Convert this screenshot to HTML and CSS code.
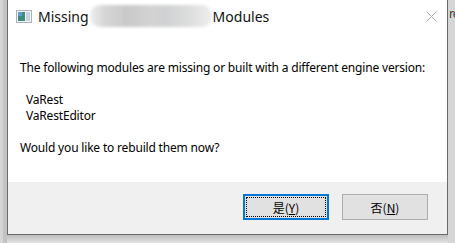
FILE: index.html
```html
<!DOCTYPE html>
<html>
<head>
<meta charset="utf-8">
<link rel="stylesheet" href="styles.css">
</head>
<body>
<div class="screen">
  <div class="side-left"></div>
  <div class="window-col">
    <div class="window">
      <div class="titlebar">
        <svg class="app-icon" width="16" height="13" viewBox="0 0 16 13">
          <rect x="0.5" y="0.5" width="15" height="12" fill="#f4f6f8" stroke="#a9b0b8"/>
          <rect x="2" y="2" width="7" height="9" fill="#3f8a7c"/>
          <rect x="2" y="2" width="4" height="4" fill="#5aa0c8"/>
          <rect x="10" y="2" width="4" height="9" fill="#c8d2dc"/>
        </svg>
        <span class="title">Missing</span>
        <span class="blur"></span>
        <span class="title">Modules</span>
        <span class="spacer"></span>
        <svg class="close" width="11" height="11" viewBox="0 0 11 11">
          <path d="M0.5 0.5 L10.5 10.5 M10.5 0.5 L0.5 10.5" stroke="#a8a8a8" stroke-width="1"/>
        </svg>
      </div>
      <div class="content">
        <p class="msg">The following modules are missing or built with a different engine version:</p>
        <div class="mods">
          <div>VaRest</div>
          <div>VaRestEditor</div>
        </div>
        <p class="msg">Would you like to rebuild them now?</p>
      </div>
      <div class="footer">
        <button class="btn default">是(<u>Y</u>)</button>
        <button class="btn">否(<u>N</u>)</button>
      </div>
    </div>
    <div class="shadow"></div>
  </div>
  <div class="side-right"><span class="bgtext">re</span></div>
</div>
</body>
</html>
```
FILE: styles.css
```css
html, body {
  margin: 0;
  padding: 0;
  width: 455px;
  height: 243px;
  overflow: hidden;
  background: #cfcfcf;
  font-family: "Noto Sans", "Noto Sans CJK SC", sans-serif;
}
.screen {
  display: flex;
  height: 243px;
}
.side-left {
  width: 7px;
  background: linear-gradient(to right, #d6d6d6 0 3px, #c3c3c3 3px 7px);
}
.window-col {
  width: 441px;
  display: flex;
  flex-direction: column;
}
.window {
  height: 235px;
  box-sizing: border-box;
  border: 1px solid #6a6a6a;
  border-top: none;
  background: #ffffff;
  display: flex;
  flex-direction: column;
}
.shadow {
  flex: 1;
  background: linear-gradient(to bottom, #bdbdbd, #e4e4e4);
}
.side-right {
  flex: 1;
  background: #d6d6d6;
  display: flex;
  align-items: flex-start;
  overflow: hidden;
}
.bgtext {
  margin: 7px 0 0 1px;
  font-size: 12px;
  line-height: 14px;
  letter-spacing: -1px;
  color: #3a3a3a;
}
.titlebar {
  height: 32px;
  display: flex;
  align-items: center;
  padding: 0 10px 0 8px;
}
.app-icon {
  margin-right: 6px;
}
.title {
  font-size: 14px;
  color: #111;
}
.blur {
  width: 122px;
  height: 22px;
  margin: 0 1px 0 1px;
  border-radius: 10px;
  background: linear-gradient(to right, #eeeeee 0%, #d6d6d6 12%, #c9c9c9 30%, #d3d3d3 50%, #cfd1d3 62%, #dcdcdc 80%, #eeeeee 100%);
  filter: blur(1.5px);
}
.spacer { flex: 1; }
.content {
  flex: 1;
  padding: 28px 8px 0 12px;
  font-size: 12px;
  color: #000;
}
.msg {
  margin: 0;
  line-height: 16px;
  white-space: nowrap;
  letter-spacing: -0.18px;
}
.mods {
  padding: 16px 0 16px 6px;
  line-height: 16px;
  letter-spacing: -0.18px;
}
.footer {
  height: 52px;
  background: #f0f0f0;
  display: flex;
  justify-content: flex-end;
  align-items: flex-start;
  gap: 13px;
  padding: 12px 19px 0 0;
  box-sizing: border-box;
}
.btn {
  width: 86px;
  height: 26px;
  background: #e1e1e1;
  border: 1px solid #adadad;
  font-family: "Noto Sans CJK SC", sans-serif;
  font-size: 12px;
  color: #000;
  padding: 0;
}
.btn.default {
  border: 2px solid #0078d7;
  outline: 1px dotted #000;
  outline-offset: -4px;
}
```
